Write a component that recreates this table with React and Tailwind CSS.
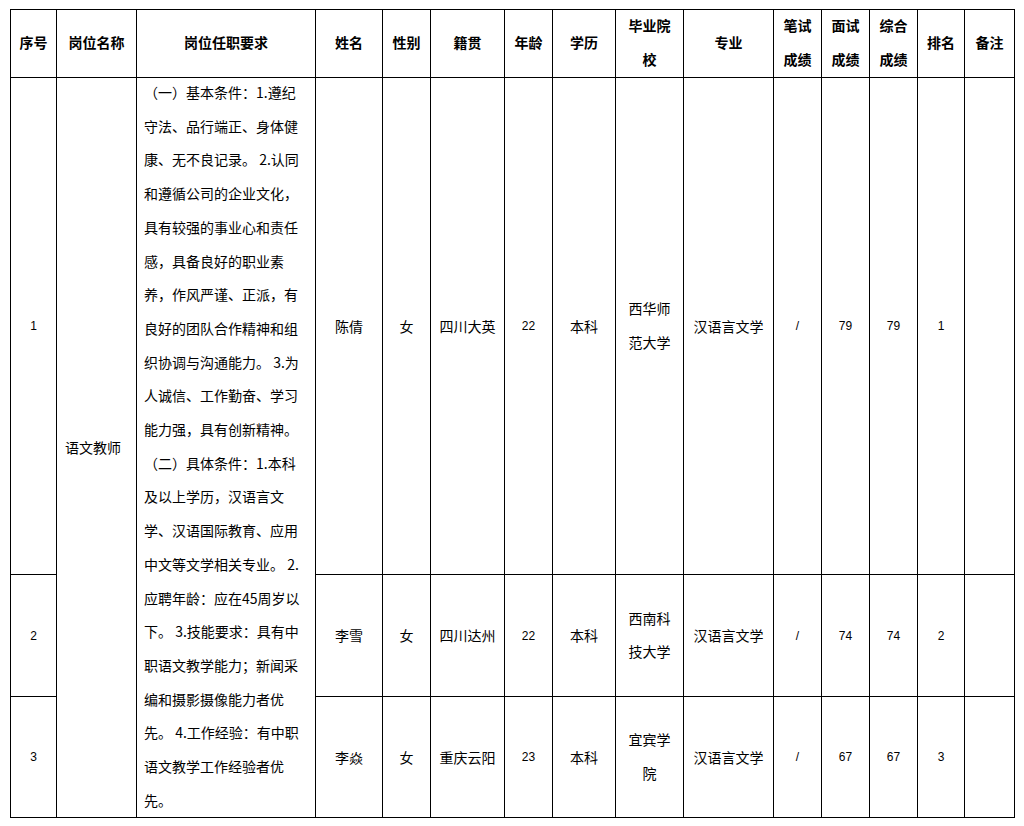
import React from "react";

const widths = [46, 80, 179, 67, 48, 74, 48, 63, 68, 90, 48, 48, 48, 47, 50];

const headers = [
  ["序号"],
  ["岗位名称"],
  ["岗位任职要求"],
  ["姓名"],
  ["性别"],
  ["籍贯"],
  ["年龄"],
  ["学历"],
  ["毕业院", "校"],
  ["专业"],
  ["笔试", "成绩"],
  ["面试", "成绩"],
  ["综合", "成绩"],
  ["排名"],
  ["备注"],
];

const reqLines = [
  "（一）基本条件：1.遵纪",
  "守法、品行端正、身体健",
  "康、无不良记录。 2.认同",
  "和遵循公司的企业文化，",
  "具有较强的事业心和责任",
  "感，具备良好的职业素",
  "养，作风严谨、正派，有",
  "良好的团队合作精神和组",
  "织协调与沟通能力。 3.为",
  "人诚信、工作勤奋、学习",
  "能力强，具有创新精神。",
  "（二）具体条件：1.本科",
  "及以上学历，汉语言文",
  "学、汉语国际教育、应用",
  "中文等文学相关专业。 2.",
  "应聘年龄：应在45周岁以",
  "下。 3.技能要求：具有中",
  "职语文教学能力；新闻采",
  "编和摄影摄像能力者优",
  "先。 4.工作经验：有中职",
  "语文教学工作经验者优",
  "先。",
];

const rows = [
  { no: "1", name: "陈倩", sex: "女", origin: "四川大英", age: "22", edu: "本科", school: ["西华师", "范大学"], major: "汉语言文学", w: "/", m: "79", t: "79", rank: "1", h: "h-[497px]" },
  { no: "2", name: "李雪", sex: "女", origin: "四川达州", age: "22", edu: "本科", school: ["西南科", "技大学"], major: "汉语言文学", w: "/", m: "74", t: "74", rank: "2", h: "h-[122px]" },
  { no: "3", name: "李焱", sex: "女", origin: "重庆云阳", age: "23", edu: "本科", school: ["宜宾学", "院"], major: "汉语言文学", w: "/", m: "67", t: "67", rank: "3", h: "h-[121px]" },
];

const cjk = "font-['SimSun','Noto_Sans_CJK_SC',sans-serif]";
const num = "font-['Liberation_Sans','Noto_Sans_CJK_SC',sans-serif] text-[12px]";
const cell = "border border-black align-middle text-center p-0";

export default function App() {
  return (
    <div className={`bg-white w-[1024px] h-[826px] pt-[9px] pl-[10px] text-black ${cjk}`}>
      <table className="border-collapse table-fixed w-[1005px] text-[14px]">
        <colgroup>
          {widths.map((w, i) => (
            <col key={i} style={{ width: w }} />
          ))}
        </colgroup>
        <thead>
          <tr className="h-[68px]">
            {headers.map((h, i) => (
              <th key={i} className={`${cell} font-bold leading-[33.5px]`}>
                <div className="-mt-[2px]">
                  {h.map((l, j) => (
                    <div key={j}>{l}</div>
                  ))}
                </div>
              </th>
            ))}
          </tr>
        </thead>
        <tbody>
          {rows.map((r, idx) => (
            <tr key={idx} className={r.h}>
              <td className={`${cell} ${num}`}>{r.no}</td>
              {idx === 0 && (
                <>
                  <td rowSpan={3} className={`${cell} text-left pl-[8px]`}>
                    语文教师
                  </td>
                  <td rowSpan={3} className={`${cell} align-top text-left`}>
                    <div className="h-[736px] -mt-[2px] pl-[7px] leading-[33.7px] whitespace-nowrap">
                      {reqLines.map((l, j) => (
                        <div key={j}>{l}</div>
                      ))}
                    </div>
                  </td>
                </>
              )}
              <td className={cell}>{r.name}</td>
              <td className={cell}>{r.sex}</td>
              <td className={cell}>{r.origin}</td>
              <td className={`${cell} ${num}`}>{r.age}</td>
              <td className={cell}>{r.edu}</td>
              <td className={`${cell} leading-[33.5px]`}>
                <div className="-mt-[1px]">
                  {r.school.map((l, j) => (
                    <div key={j}>{l}</div>
                  ))}
                </div>
              </td>
              <td className={cell}>{r.major}</td>
              <td className={`${cell} ${num}`}>{r.w}</td>
              <td className={`${cell} ${num}`}>{r.m}</td>
              <td className={`${cell} ${num}`}>{r.t}</td>
              <td className={`${cell} ${num}`}>{r.rank}</td>
              <td className={cell}></td>
            </tr>
          ))}
        </tbody>
      </table>
    </div>
  );
}
